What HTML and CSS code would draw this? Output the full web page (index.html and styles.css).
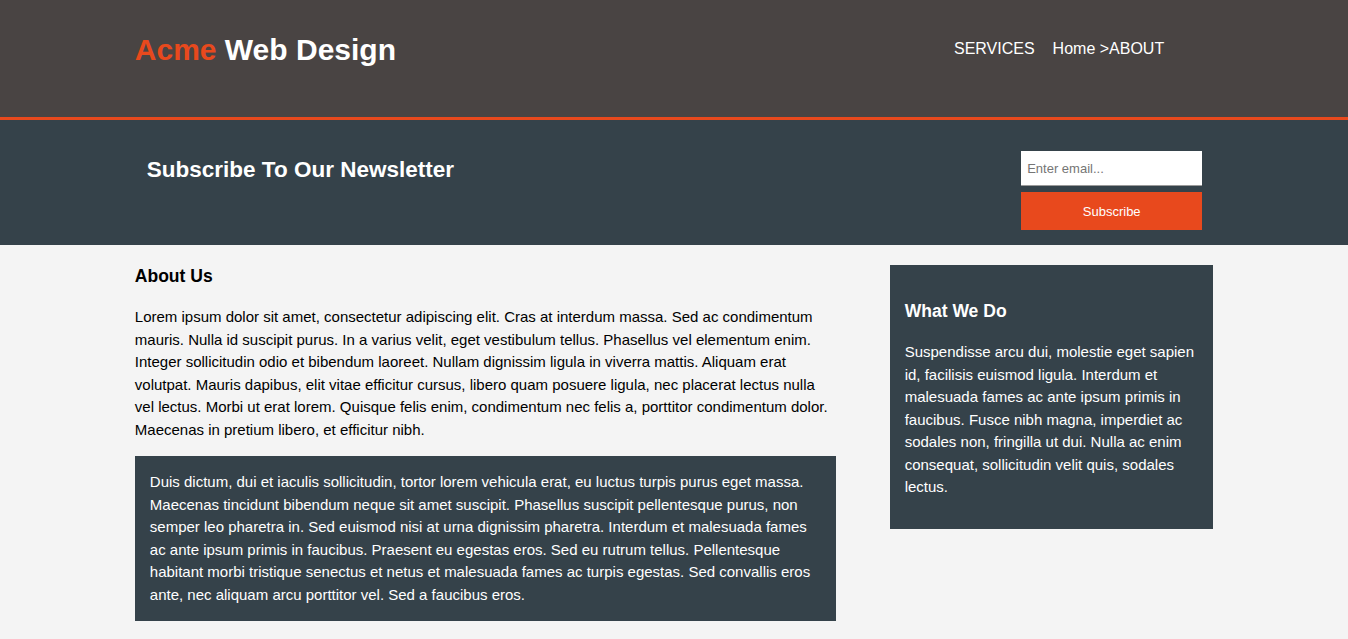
FILE: index.html
```html
<!DOCTYPE html>
<html lang="en">
<head>
<meta charset="utf-8">
<title>Acme Web Design | About</title>
<link rel="stylesheet" href="styles.css">
</head>
<body>
<header class="site-header">
  <div class="container header-inner">
    <h1 class="brand"><span class="highlight">Acme</span> Web Design</h1>
    <nav class="nav">
      <ul class="nav-list">
        <li><a href="#">SERVICES</a></li>
        <li><a href="#">Home &gt;ABOUT</a></li>
      </ul>
    </nav>
  </div>
</header>

<section class="newsletter">
  <div class="container newsletter-inner">
    <h1 class="newsletter-title">Subscribe To Our Newsletter</h1>
    <form class="subscribe-form">
      <input class="email-input" type="email" placeholder="Enter email...">
      <button class="subscribe-btn" type="submit">Subscribe</button>
    </form>
  </div>
</section>

<section class="container main-wrap">
  <article class="main-col">
    <h1 class="page-title">About Us</h1>
    <p class="intro">Lorem ipsum dolor sit amet, consectetur adipiscing elit. Cras at interdum massa. Sed ac condimentum mauris. Nulla id suscipit purus. In a varius velit, eget vestibulum tellus. Phasellus vel elementum enim. Integer sollicitudin odio et bibendum laoreet. Nullam dignissim ligula in viverra mattis. Aliquam erat volutpat. Mauris dapibus, elit vitae efficitur cursus, libero quam posuere ligula, nec placerat lectus nulla vel lectus. Morbi ut erat lorem. Quisque felis enim, condimentum nec felis a, porttitor condimentum dolor. Maecenas in pretium libero, et efficitur nibh.</p>
    <div class="dark main-dark">Duis dictum, dui et iaculis sollicitudin, tortor lorem vehicula erat, eu luctus turpis purus eget massa. Maecenas tincidunt bibendum neque sit amet suscipit. Phasellus suscipit pellentesque purus, non semper leo pharetra in. Sed euismod nisi at urna dignissim pharetra. Interdum et malesuada fames ac ante ipsum primis in faucibus. Praesent eu egestas eros. Sed eu rutrum tellus. Pellentesque habitant morbi tristique senectus et netus et malesuada fames ac turpis egestas. Sed convallis eros ante, nec aliquam arcu porttitor vel. Sed a faucibus eros.</div>
  </article>

  <aside class="sidebar">
    <div class="dark side-dark">
      <h3 class="side-title">What We Do</h3>
      <p class="side-text">Suspendisse arcu dui, molestie eget sapien id, facilisis euismod ligula. Interdum et malesuada fames ac ante ipsum primis in faucibus. Fusce nibh magna, imperdiet ac sodales non, fringilla ut dui. Nulla ac enim consequat, sollicitudin velit quis, sodales lectus.</p>
    </div>
  </aside>
</section>
</body>
</html>
```

FILE: styles.css
```css
* {
  box-sizing: border-box;
}

body {
  margin: 0;
  padding: 0;
  font-family: "Liberation Sans", Arial, Helvetica, sans-serif;
  font-size: 15px;
  line-height: 1.5;
  background-color: #f4f4f4;
  color: #000;
}

.container {
  width: 80%;
  margin: 0 auto;
}

/* Header */
.site-header {
  background-color: #494443;
  border-bottom: 3px solid #e8491d;
  height: 120px;
  padding-top: 27px;
}

.header-inner {
  display: flex;
  justify-content: space-between;
  align-items: flex-start;
}

.brand {
  margin: 0;
  font-size: 30px;
  line-height: 45px;
  font-weight: bold;
  color: #fff;
}

.highlight {
  color: #e8491d;
}

.nav-list {
  list-style: none;
  margin: 10px 49px 0 0;
  padding: 0;
  display: flex;
  gap: 18px;
}

.nav-list a {
  color: #fff;
  text-decoration: none;
  font-size: 16px;
  line-height: 24px;
}

/* Newsletter */
.newsletter {
  background-color: #35424a;
  color: #fff;
  padding: 31px 0 15px;
}

.newsletter-inner {
  display: flex;
  justify-content: space-between;
  align-items: flex-start;
  padding: 0 11px 0 12px;
}

.newsletter-title {
  margin: 2px 0 0;
  font-size: 22.5px;
  line-height: 33.75px;
  font-weight: bold;
}

.subscribe-form {
  display: flex;
  flex-direction: column;
  gap: 6px;
  width: 181px;
}

.email-input {
  height: 35px;
  border: none;
  border-bottom: 1px solid #9a9a9a;
  padding: 0 6px;
  font-family: "Liberation Sans", Arial, sans-serif;
  font-size: 13px;
  background: #fff;
  outline: none;
}

.email-input::placeholder {
  color: #757575;
}

.subscribe-btn {
  height: 38px;
  border: none;
  background-color: #e8491d;
  color: #fff;
  font-family: "Liberation Sans", Arial, sans-serif;
  font-size: 13px;
  padding: 0;
}

/* Main */
.main-wrap {
  display: flex;
  justify-content: space-between;
  align-items: flex-start;
}

.main-col {
  width: 65%;
}

.page-title {
  font-size: 1.17em;
  margin: 17.5px 0 17.5px;
  font-weight: bold;
}

.intro {
  margin: 0 0 15px;
}

.dark {
  background-color: #35424a;
  color: #fff;
  padding: 15px;
}

.main-dark {
  margin: 0 0 15px;
}

.sidebar {
  width: 30%;
  margin-top: 20px;
}

.side-title {
  font-size: 1.17em;
  margin: 17.5px 0;
  font-weight: bold;
}

.side-text {
  margin: 0 0 15px;
}
```
